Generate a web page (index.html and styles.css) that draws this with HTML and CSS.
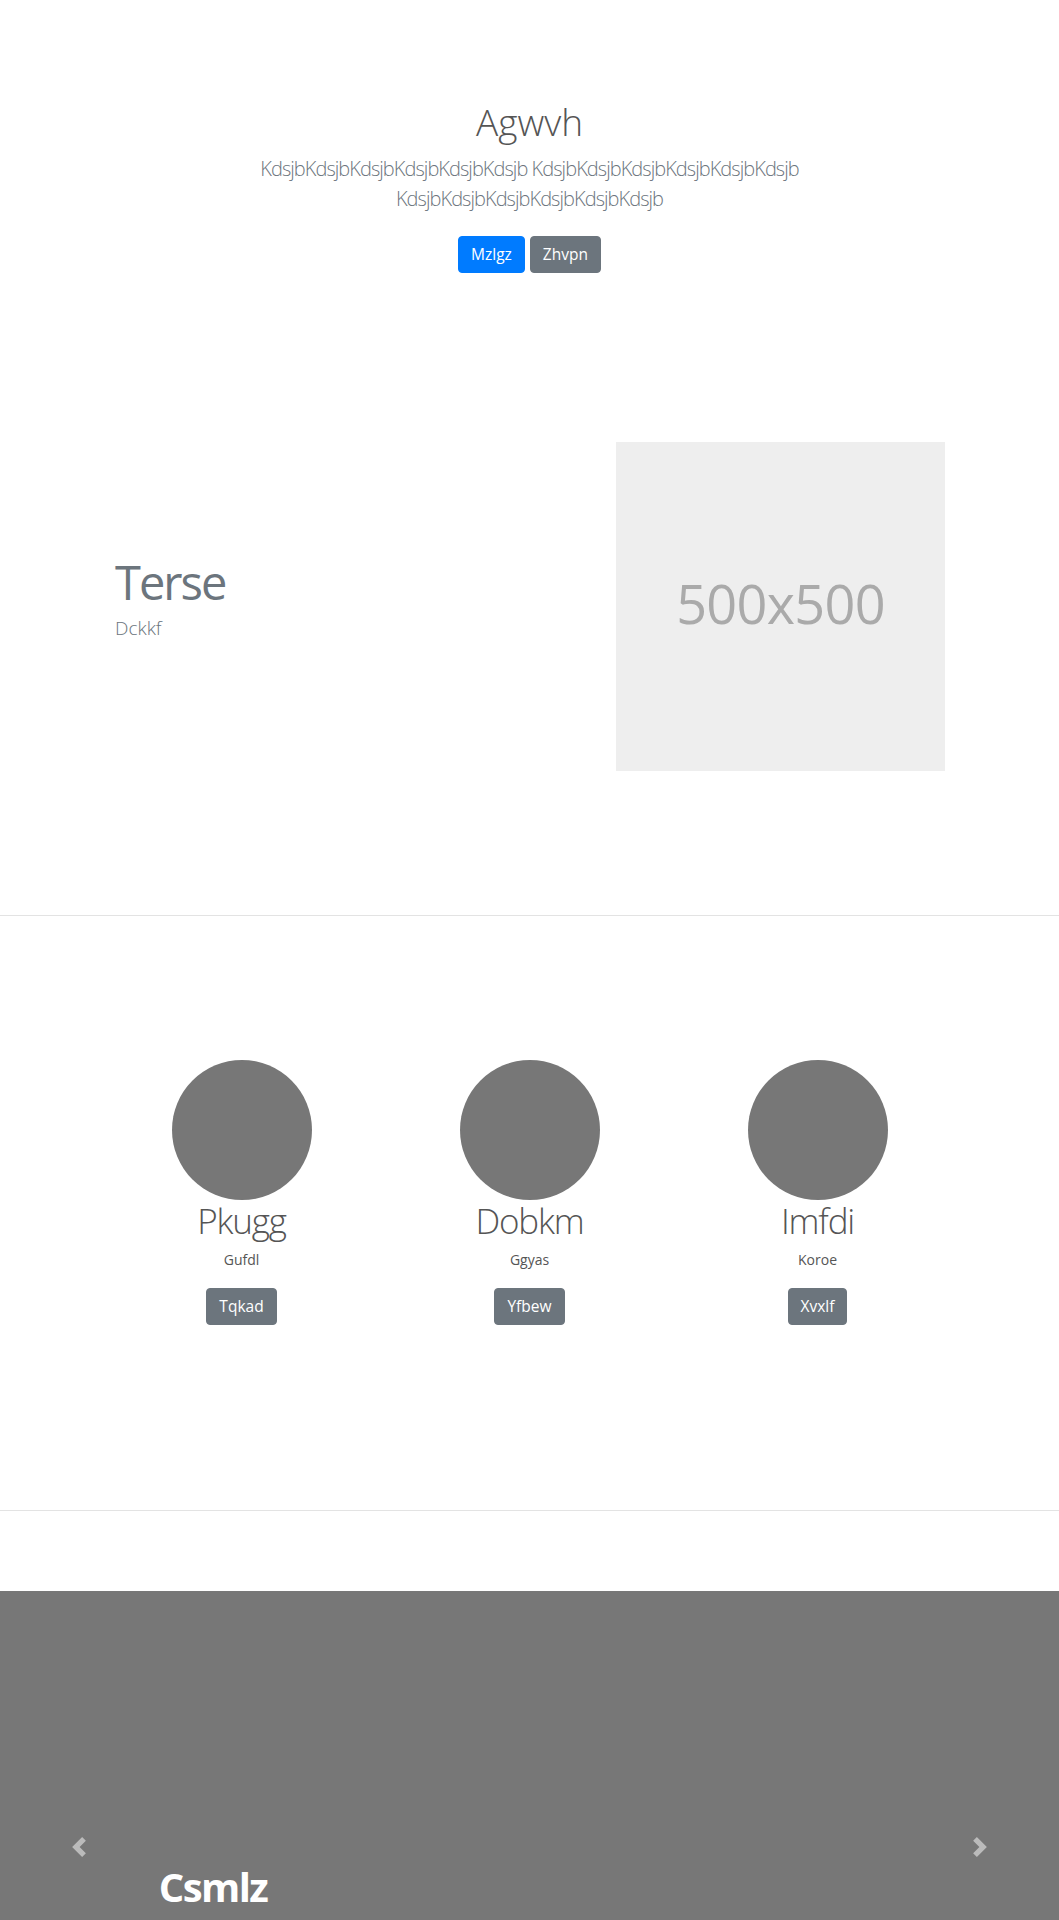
FILE: index.html
```html
<!DOCTYPE html>
<html lang="en">
<head>
<meta charset="utf-8">
<title>Agwvh</title>
<link rel="stylesheet" href="styles.css">
</head>
<body>
<section class="hero">
  <h1 class="hero-title">Agwvh</h1>
  <p class="hero-lead">KdsjbKdsjbKdsjbKdsjbKdsjbKdsjb KdsjbKdsjbKdsjbKdsjbKdsjbKdsjb KdsjbKdsjbKdsjbKdsjbKdsjbKdsjb</p>
  <div class="hero-actions">
    <a class="btn btn-primary" href="#">Mzlgz</a>
    <a class="btn btn-secondary" href="#">Zhvpn</a>
  </div>
</section>

<section class="feature">
  <div class="feature-text">
    <h2 class="feature-title">Terse</h2>
    <p class="feature-sub">Dckkf</p>
  </div>
  <div class="placeholder">500x500</div>
</section>

<hr class="divider">

<section class="team">
  <div class="member">
    <div class="avatar"></div>
    <h3 class="member-name">Pkugg</h3>
    <p class="member-role">Gufdl</p>
    <a class="btn btn-secondary" href="#">Tqkad</a>
  </div>
  <div class="member">
    <div class="avatar"></div>
    <h3 class="member-name">Dobkm</h3>
    <p class="member-role">Ggyas</p>
    <a class="btn btn-secondary" href="#">Yfbew</a>
  </div>
  <div class="member">
    <div class="avatar"></div>
    <h3 class="member-name">Imfdi</h3>
    <p class="member-role">Koroe</p>
    <a class="btn btn-secondary" href="#">Xvxlf</a>
  </div>
</section>

<hr class="divider">

<div class="spacer"></div>

<section class="carousel">
  <a class="carousel-control control-prev" href="#">
    <svg class="control-icon" viewBox="0 0 8 8" width="20" height="20"><path d="M5.25 0l-4 4 4 4 1.5-1.5L4.25 4l2.5-2.5L5.25 0z" fill="#fff"/></svg>
  </a>
  <a class="carousel-control control-next" href="#">
    <svg class="control-icon" viewBox="0 0 8 8" width="20" height="20"><path d="M2.75 0l-1.5 1.5L3.75 4l-2.5 2.5L2.75 8l4-4-4-4z" fill="#fff"/></svg>
  </a>
  <div class="carousel-caption">
    <h2 class="caption-title">Csmlz</h2>
  </div>
</section>
</body>
</html>
```

FILE: styles.css
```css
* { box-sizing: border-box; }

body {
  margin: 0;
  font-family: "Open Sans", "Noto Sans", "Liberation Sans", sans-serif;
  font-size: 16px;
  line-height: 1.5;
  color: #212529;
  background: #fff;
}

h1, h2, h3, p { margin: 0; }

.hero {
  padding: 100px 20px 25px;
  text-align: center;
}

.hero-title {
  font-size: 37px;
  font-weight: 300;
  line-height: 43px;
  color: #555;
  margin-bottom: 11px;
}

.hero-lead {
  max-width: 600px;
  margin: 0 auto 22px;
  font-size: 20px;
  font-weight: 300;
  line-height: 30px;
  color: #6c757d;
  letter-spacing: -0.95px;
}

.hero-actions {
  display: flex;
  justify-content: center;
  gap: 5px;
}

.btn {
  display: inline-block;
  padding: 6px 12px;
  font-size: 15.5px;
  line-height: 23px;
  border: 1px solid transparent;
  border-radius: 4px;
  color: #fff;
  text-decoration: none;
  text-align: center;
}

.btn-primary { background: #007bff; border-color: #007bff; }
.btn-secondary { background: #6c757d; border-color: #6c757d; }

.feature {
  display: flex;
  align-items: center;
  justify-content: space-between;
  padding: 144px 114px 144px 115px;
}

.feature-title {
  font-size: 47px;
  font-weight: 400;
  line-height: 57.6px;
  color: #6c757d;
  letter-spacing: -2px;
}

.feature-sub {
  margin-top: 2px;
  margin-bottom: 16px;
  font-size: 19px;
  font-weight: 300;
  line-height: 30px;
  color: #6c757d;
}

.placeholder {
  width: 329px;
  height: 329px;
  padding-bottom: 7px;
  background: #eee;
  color: #aaa;
  font-size: 54px;
  display: flex;
  align-items: center;
  justify-content: center;
  letter-spacing: -0.7px;
}

.divider {
  margin: 0;
  border: 0;
  border-top: 1px solid #e3e3e3;
}

.team {
  display: grid;
  grid-template-columns: repeat(3, 288px);
  justify-content: center;
  padding: 144px 0 185px;
}

.member {
  display: flex;
  flex-direction: column;
  align-items: center;
  text-align: center;
}

.avatar {
  width: 140px;
  height: 140px;
  border-radius: 50%;
  background: #777;
}

.member-name {
  margin-top: -1px;
  font-size: 35px;
  font-weight: 300;
  line-height: 43px;
  color: #555;
  letter-spacing: -1.2px;
}

.member-role {
  margin-top: 6px;
  margin-bottom: 16px;
  font-size: 14px;
  line-height: 24px;
  color: #555;
}

.spacer { height: 80px; }

.carousel {
  position: relative;
  height: 512px;
  background: #777;
}

.carousel-control {
  position: absolute;
  top: 0;
  bottom: 0;
  width: 15%;
  display: flex;
  align-items: center;
  justify-content: center;
  opacity: 0.5;
}

.control-prev { left: 0; }
.control-next { right: 0; }

.carousel-caption {
  position: absolute;
  top: 272px;
  left: 15%;
  right: 15%;
  color: #fff;
}

.caption-title {
  font-size: 40px;
  font-weight: 700;
  line-height: 48px;
  letter-spacing: -1.6px;
}
```
